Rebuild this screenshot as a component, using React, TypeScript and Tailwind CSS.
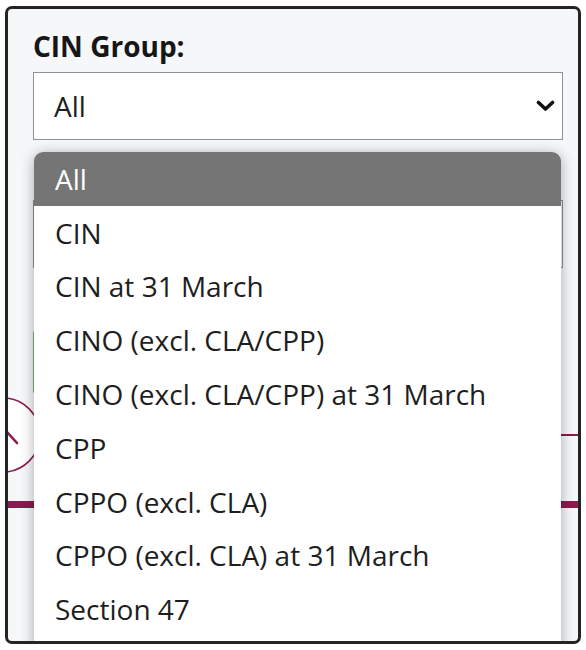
import React from 'react';

const groups = [
  'All',
  'CIN',
  'CIN at 31 March',
  'CINO (excl. CLA/CPP)',
  'CINO (excl. CLA/CPP) at 31 March',
  'CPP',
  'CPPO (excl. CLA)',
  'CPPO (excl. CLA) at 31 March',
  'Section 47',
];

const Chevron = () => (
  <svg width="19" height="12" viewBox="0 0 19 12" fill="none">
    <polyline points="2.5,2.5 9.5,9 16.5,2.5" stroke="#111" strokeWidth="3.6" strokeLinecap="round" strokeLinejoin="round" />
  </svg>
);

export default function App() {
  const selected = 'All';

  return (
    <div className="h-[650px] w-[586px] bg-white pl-[5px] pr-[5px] pt-[6px] pb-[6px] font-['Open_Sans',sans-serif]">
      <div className="relative h-full overflow-hidden rounded-[7px] border-[3px] border-[#232426] bg-[#f6f7f9] pl-[25px] pr-[15px] pt-[18px]">
        <label className="block text-[28px] font-bold leading-[38px] text-[#161616]">CIN Group:</label>

        <div className="mt-[7px] flex h-[68px] items-center justify-between border border-[#8c9197] bg-white pl-[20px] pr-[7px]">
          <span className="text-[28px] text-[#1e1e1e]">{selected}</span>
          <Chevron />
        </div>

        {/* page content sitting under the open list */}
        <div className="mt-[60px] h-[68px] border border-[#8c9197] bg-white" />
        <div className="mt-[62px] h-[64px] w-[220px] rounded-[3px] border border-[#7fa86f] bg-[#eef5ea]" />
        <div className="relative -ml-[25px] -mr-[15px] mt-[3px] flex h-[76px] items-center">
          <svg width="46" height="76" viewBox="0 0 46 76" className="-ml-[3px] shrink-0">
            <circle cx="-2" cy="38" r="37" fill="#ffffff" stroke="#8a1c4f" strokeWidth="1.6" />
            <line x1="2" y1="35" x2="12" y2="46" stroke="#8a1c4f" strokeWidth="2.6" strokeLinecap="round" />
          </svg>
          <div className="h-[2px] flex-1 bg-[#8a1c4f]" />
        </div>
        <div className="-ml-[25px] -mr-[15px] mt-[28px] h-[7px] bg-[#8a1c4f]" />

        {/* open option list */}
        <ul className="absolute left-[26px] top-[143px] h-[500px] w-[527px] overflow-hidden rounded-t-[9px] bg-white shadow-[0_2px_14px_rgba(0,0,0,0.32)]">
          {groups.map((g) => (
            <li
              key={g}
              className={
                g === selected
                  ? 'flex h-[53.8px] items-center bg-[#757575] pl-[21px] text-[28px] text-white'
                  : 'flex h-[53.8px] items-center pl-[21px] text-[28px] text-[#1e1e1e]'
              }
            >
              {g}
            </li>
          ))}
        </ul>
      </div>
    </div>
  );
}
